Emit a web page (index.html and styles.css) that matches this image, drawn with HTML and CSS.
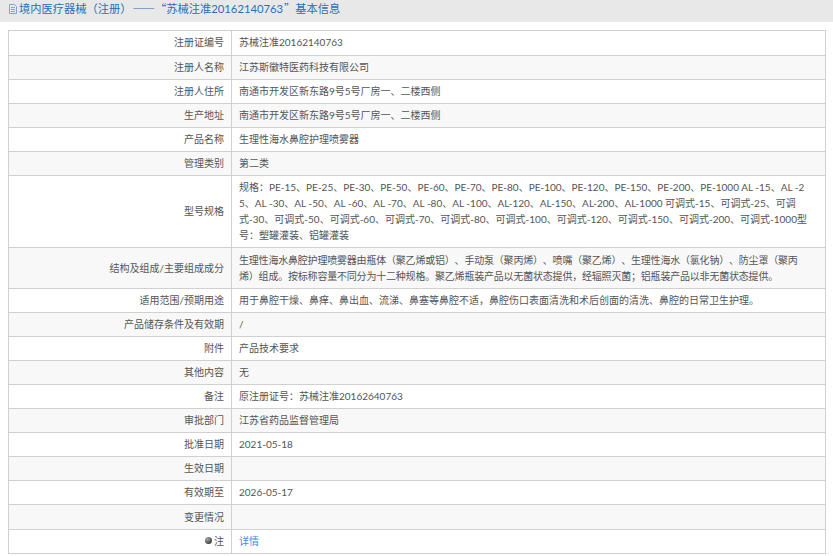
FILE: index.html
```html
<!DOCTYPE html>
<html lang="zh-CN">
<head>
  <meta charset="UTF-8">
  <title>基本信息</title>
  <link rel="stylesheet" href="styles.css">
</head>
<body>
  <div class="page-title">
    <svg class="title-icon" viewBox="0 0 10 11" width="10" height="11">
      <path d="M1.5 1.5H6.5L8.5 3.5V10.5H1.5Z M3 4.5H7 M3 6.5H7 M3 8.5H7" />
    </svg>
    <span>境内医疗器械（注册）<span class="cjk">——“</span>苏械注准20162140763<span class="cjk">”</span>基本信息</span>
  </div>

  <table class="info-table">
    <tr class="row-tall"><td class="label">注册证编号</td><td>苏械注准20162140763</td></tr>
    <tr><td class="label">注册人名称</td><td>江苏斯徽特医药科技有限公司</td></tr>
    <tr><td class="label">注册人住所</td><td>南通市开发区新东路9号5号厂房一、二楼西侧</td></tr>
    <tr><td class="label">生产地址</td><td>南通市开发区新东路9号5号厂房一、二楼西侧</td></tr>
    <tr><td class="label">产品名称</td><td>生理性海水鼻腔护理喷雾器</td></tr>
    <tr><td class="label">管理类别</td><td>第二类</td></tr>
    <tr><td class="label">型号规格</td><td>规格：PE-15、PE-25、PE-30、PE-50、PE-60、PE-70、PE-80、PE-100、PE-120、PE-150、PE-200、PE-1000 AL -15、AL -25、AL -30、AL -50、AL -60、AL -70、AL -80、AL -100、AL-120、AL-150、AL-200、AL-1000 可调式-15、可调式-25、可调<br>式-30、可调式-50、可调式-60、可调式-70、可调式-80、可调式-100、可调式-120、可调式-150、可调式-200、可调式-1000型号：塑罐灌装、铝罐灌装</td></tr>
    <tr class="row-tall"><td class="label">结构及组成/主要组成成分</td><td class="tight">生理性海水鼻腔护理喷雾器由瓶体（聚乙烯或铝）、手动泵（聚丙烯）、喷嘴（聚乙烯）、生理性海水（氯化钠）、防尘罩（聚丙烯）组成。按标称容量不同分为十二种规格。聚乙烯瓶装产品以无菌状态提供，经辐照灭菌；铝瓶装产品以非无菌状态提供。</td></tr>
    <tr><td class="label">适用范围/预期用途</td><td>用于鼻腔干燥、鼻痒、鼻出血、流涕、鼻塞等鼻腔不适，鼻腔伤口表面清洗和术后创面的清洗、鼻腔的日常卫生护理。</td></tr>
    <tr><td class="label">产品储存条件及有效期</td><td>/</td></tr>
    <tr><td class="label">附件</td><td>产品技术要求</td></tr>
    <tr><td class="label">其他内容</td><td>无</td></tr>
    <tr><td class="label">备注</td><td>原注册证号：苏械注准20162640763</td></tr>
    <tr><td class="label">审批部门</td><td>江苏省药品监督管理局</td></tr>
    <tr><td class="label">批准日期</td><td>2021-05-18</td></tr>
    <tr><td class="label">生效日期</td><td></td></tr>
    <tr><td class="label">有效期至</td><td>2026-05-17</td></tr>
    <tr class="row-tall"><td class="label">变更情况</td><td></td></tr>
    <tr>
      <td class="label"><span class="note-dot"></span>注</td>
      <td><a href="#" class="detail-link">详情</a></td>
    </tr>
  </table>
</body>
</html>
```

FILE: styles.css
```css
* {
  box-sizing: border-box;
}

body {
  margin: 0;
  background-color: #fff;
  color: #555;
  font-family: Lato, "Noto Sans CJK SC", sans-serif;
  font-size: 10px;
  line-height: 16px;
  text-spacing-trim: space-all;
}

.page-title {
  display: flex;
  align-items: flex-start;
  height: 22px;
  padding-left: 8px;
  background-color: #e8e8e8;
  color: #2a6fb8;
  font-size: 11.25px;
}

.page-title .cjk {
  margin-left: 1px;
  font-family: "Noto Sans CJK SC", sans-serif;
}

.title-icon {
  flex: none;
  margin: 3px 1px 0 0;
  fill: none;
  stroke: #7fa6cf;
  stroke-width: 1;
}

.info-table {
  width: 818px;
  margin: 8px 0 0 8px;
  border-collapse: collapse;
  border: 1px solid #d0d0d0;
}

.info-table td {
  padding: 3px 18px 4px 7px;
  border: 1px solid #d0d0d0;
  height: 24px;
  word-break: break-all;
}

.info-table .row-tall td {
  padding-top: 4px;
  height: 25px;
}

.info-table tr:first-child td {
  padding-top: 3px;
  padding-bottom: 5px;
}

.info-table tr:nth-child(even) {
  background-color: #f8f8f8;
}

.info-table .label {
  width: 223px;
  padding-right: 7px;
  text-align: right;
}

.info-table .tight {
  padding-right: 20px;
  letter-spacing: -0.2px;
}

.note-dot {
  display: inline-block;
  width: 7px;
  height: 7px;
  margin-right: 2px;
  vertical-align: 1px;
  border-radius: 50%;
  background: radial-gradient(circle at 35% 30%, #aaa, #444 70%);
}

.detail-link {
  color: #3d8fe0;
  text-decoration: none;
}
```
